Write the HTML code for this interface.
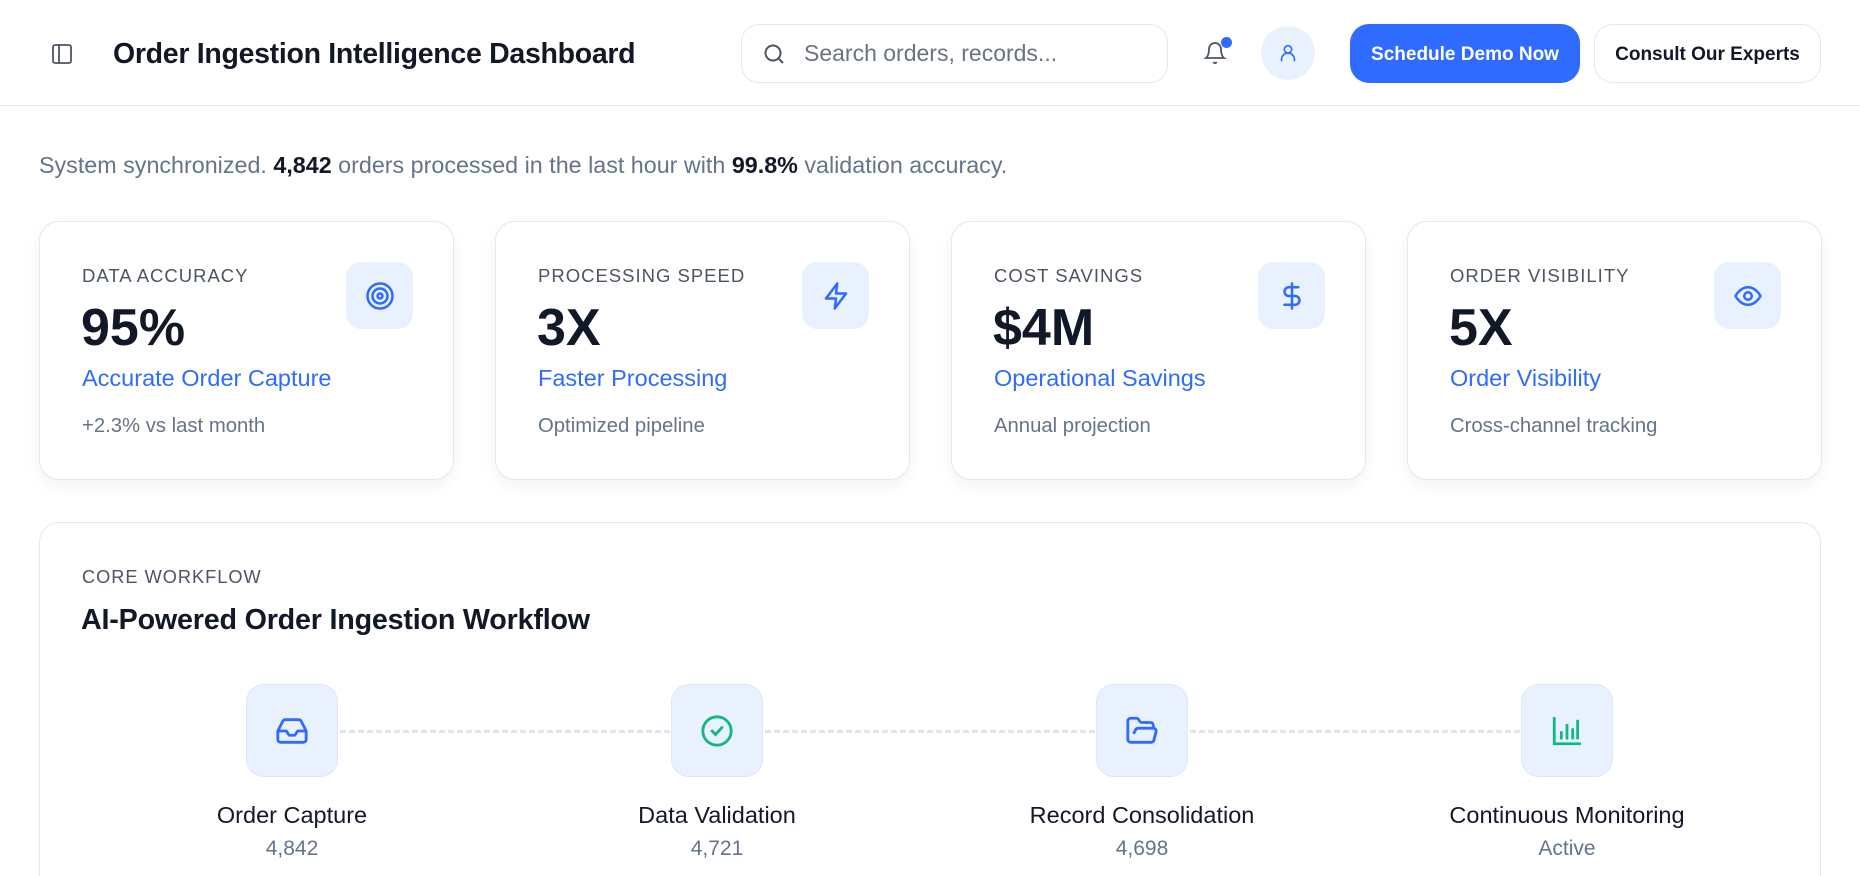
<!DOCTYPE html>
<html style="height:876px;overflow:hidden"><head><meta charset="utf-8"><style>
*{box-sizing:border-box;margin:0;padding:0}
body{width:1860px;height:876px;overflow:hidden;background:#fff;font-family:"Liberation Sans",Arial,sans-serif;color:#111827;position:relative}
.abs{position:absolute}
header{position:absolute;left:0;top:0;width:1860px;height:106px;border-bottom:1.5px solid #e5e7eb;background:#fff}
.title{left:113px;top:38px;font-size:28.5px;font-weight:700;letter-spacing:-0.3px;color:#111827}
.search{left:741px;top:24px;width:427px;height:59px;border:1.5px solid #e2e8f0;border-radius:18px;}
.search span{position:absolute;left:62px;top:15px;font-size:23px;color:#6b7280}
.btn1{left:1350px;top:24px;width:230px;height:59px;border-radius:19px;background:#2f6bff;color:#fff;font-size:19px;font-weight:700;text-align:center;line-height:61px}
.btn2{left:1594px;top:24px;width:227px;height:59px;border-radius:19px;border:1.5px solid #e2e8f0;color:#111827;font-size:19px;font-weight:700;text-align:center;line-height:60px}
.avatar{left:1261px;top:26px;width:54px;height:54px;border-radius:50%;background:#eaf1fe}
.summary{left:39px;top:152px;font-size:23.3px;color:#64748b}
.summary b{color:#111827;font-weight:600}
.card{top:221px;width:415px;height:259px;border:1.5px solid #e2e8f0;border-radius:20px;background:#fff;box-shadow:0 6px 16px rgba(15,23,42,0.05)}
.card .lab{position:absolute;left:42px;top:43px;font-size:18.5px;letter-spacing:1px;color:#4b5563}
.card .val{position:absolute;left:41px;top:76px;font-size:52px;font-weight:700;color:#111827}
.card .sub{position:absolute;left:42px;top:143px;font-size:23.5px;color:#2f6bff}
.card .note{position:absolute;left:42px;top:193px;font-size:20.3px;color:#64748b}
.card .ic{position:absolute;left:306px;top:40px;width:67px;height:67px;border-radius:15px;background:#eaf1fe;display:flex;align-items:center;justify-content:center}
.wf{left:39px;top:522px;width:1782px;height:420px;border:1.5px solid #e2e8f0;border-radius:20px}
.wf .lab{position:absolute;left:42px;top:44px;font-size:18.2px;letter-spacing:1px;color:#4b5563}
.wf h2{position:absolute;left:41px;top:81px;font-size:28.7px;font-weight:700;color:#111827;letter-spacing:-0.2px}
.step{position:absolute;top:684px;width:92px;height:93px;border-radius:18px;background:#eaf1fe;border:1.5px solid #dbe6fb;display:flex;align-items:center;justify-content:center}
.sl{position:absolute;top:802px;width:340px;text-align:center;font-size:23.5px;color:#111827}
.sn{position:absolute;top:837px;width:340px;text-align:center;font-size:21px;color:#64748b}
.dash{position:absolute;top:730px;height:0;border-top:3px dashed #dfe4ec}
</style></head><body>
<header>
<svg class="abs" style="left:50px;top:42px" width="24" height="24" viewBox="0 0 24 24" fill="none" stroke="#4b5563" stroke-width="1.8"><rect x="3" y="3" width="18" height="18" rx="2"/><path d="M9 3v18"/></svg>
<div class="abs title">Order Ingestion Intelligence Dashboard</div>
<div class="abs search"><svg class="abs" style="left:20px;top:17px" width="24" height="24" viewBox="0 0 24 24" fill="none" stroke="#4b5563" stroke-width="2"><circle cx="11" cy="11" r="7.5"/><path d="M21 21l-4.5-4.5"/></svg><span>Search orders, records...</span></div>
<svg class="abs" style="left:1203px;top:41px" width="24" height="24" viewBox="0 0 24 24" fill="none" stroke="#4b5563" stroke-width="1.8"><path d="M6 8a6 6 0 0 1 12 0c0 7 3 9 3 9H3s3-2 3-9"/><path d="M10.3 21a1.9 1.9 0 0 0 3.4 0"/></svg>
<div class="abs" style="left:1221px;top:37px;width:11px;height:11px;border-radius:50%;background:#2f6bff"></div>
<div class="abs avatar"><svg class="abs" style="left:16px;top:15px" width="22" height="24" viewBox="0 0 24 24" fill="none" stroke="#2f6bff" stroke-width="1.8"><circle cx="12" cy="8" r="4"/><path d="M5 21v-2a7 7 0 0 1 14 0v2"/></svg></div>
<div class="abs btn1">Schedule Demo Now</div>
<div class="abs btn2">Consult Our Experts</div>
</header>
<div class="abs summary">System synchronized. <b>4,842</b> orders processed in the last hour with <b>99.8%</b> validation accuracy.</div>

<div class="abs card" style="left:39px"><div class="lab">DATA ACCURACY</div><div class="val">95%</div><div class="sub">Accurate Order Capture</div><div class="note">+2.3% vs last month</div>
<div class="ic"><svg width="30" height="30" viewBox="0 0 24 24" fill="none" stroke="#2f6bff" stroke-width="2"><circle cx="12" cy="12" r="10"/><circle cx="12" cy="12" r="6"/><circle cx="12" cy="12" r="2"/></svg></div></div>
<div class="abs card" style="left:495px"><div class="lab">PROCESSING SPEED</div><div class="val">3X</div><div class="sub">Faster Processing</div><div class="note">Optimized pipeline</div>
<div class="ic"><svg width="30" height="30" viewBox="0 0 24 24" fill="none" stroke="#2f6bff" stroke-width="2" stroke-linejoin="round"><path d="M13 2L4 14h8l-1 8 9-12h-8l1-8z"/></svg></div></div>
<div class="abs card" style="left:951px"><div class="lab">COST SAVINGS</div><div class="val">$4M</div><div class="sub">Operational Savings</div><div class="note">Annual projection</div>
<div class="ic"><svg width="30" height="30" viewBox="0 0 24 24" fill="none" stroke="#2f6bff" stroke-width="2" stroke-linecap="round"><path d="M12 2v20"/><path d="M17 5H9.5a3.5 3.5 0 0 0 0 7h5a3.5 3.5 0 0 1 0 7H6"/></svg></div></div>
<div class="abs card" style="left:1407px"><div class="lab">ORDER VISIBILITY</div><div class="val">5X</div><div class="sub">Order Visibility</div><div class="note">Cross-channel tracking</div>
<div class="ic"><svg width="30" height="30" viewBox="0 0 24 24" fill="none" stroke="#2f6bff" stroke-width="2"><path d="M2 12s3.5-7 10-7 10 7 10 7-3.5 7-10 7S2 12 2 12z"/><circle cx="12" cy="12" r="3"/></svg></div></div>

<div class="abs wf"><div class="lab">CORE WORKFLOW</div><h2>AI-Powered Order Ingestion Workflow</h2></div>
<div class="dash" style="left:340px;width:330px"></div>
<div class="dash" style="left:765px;width:330px"></div>
<div class="dash" style="left:1190px;width:330px"></div>
<div class="step" style="left:246px"><svg width="34" height="34" viewBox="0 0 24 24" fill="none" stroke="#2f6bff" stroke-width="2" stroke-linejoin="round"><path d="M22 12h-6l-2 3h-4l-2-3H2"/><path d="M5.5 5.1L2 12v6a2 2 0 0 0 2 2h16a2 2 0 0 0 2-2v-6l-3.5-6.9A2 2 0 0 0 16.8 4H7.2a2 2 0 0 0-1.7 1.1z"/></svg></div>
<div class="step" style="left:671px"><svg width="34" height="34" viewBox="0 0 24 24" fill="none" stroke="#10b981" stroke-width="2" stroke-linecap="round"><circle cx="12" cy="12" r="10"/><path d="M8.5 12l2.5 2.5 4.5-5"/></svg></div>
<div class="step" style="left:1096px"><svg width="34" height="34" viewBox="0 0 24 24" fill="none" stroke="#2f6bff" stroke-width="2" stroke-linejoin="round"><path d="M6 14l1.5-2.9A2 2 0 0 1 9.2 10H20a2 2 0 0 1 1.9 2.5l-1.5 6A2 2 0 0 1 18.5 20H4a2 2 0 0 1-2-2V5a2 2 0 0 1 2-2h3.9a2 2 0 0 1 1.7.9l.8 1.2a2 2 0 0 0 1.7.9H18a2 2 0 0 1 2 2v2"/></svg></div>
<div class="step" style="left:1521px"><svg width="34" height="34" viewBox="0 0 24 24" fill="none" stroke="#10b981" stroke-width="2" stroke-linecap="round"><path d="M3 3v18h18"/><path d="M8 17v-4M12 17V8M16 17v-6M19.5 17V5"/></svg></div>
<div class="sl" style="left:122px">Order Capture</div><div class="sn" style="left:122px">4,842</div>
<div class="sl" style="left:547px">Data Validation</div><div class="sn" style="left:547px">4,721</div>
<div class="sl" style="left:972px">Record Consolidation</div><div class="sn" style="left:972px">4,698</div>
<div class="sl" style="left:1397px">Continuous Monitoring</div><div class="sn" style="left:1397px">Active</div>
</body></html>
